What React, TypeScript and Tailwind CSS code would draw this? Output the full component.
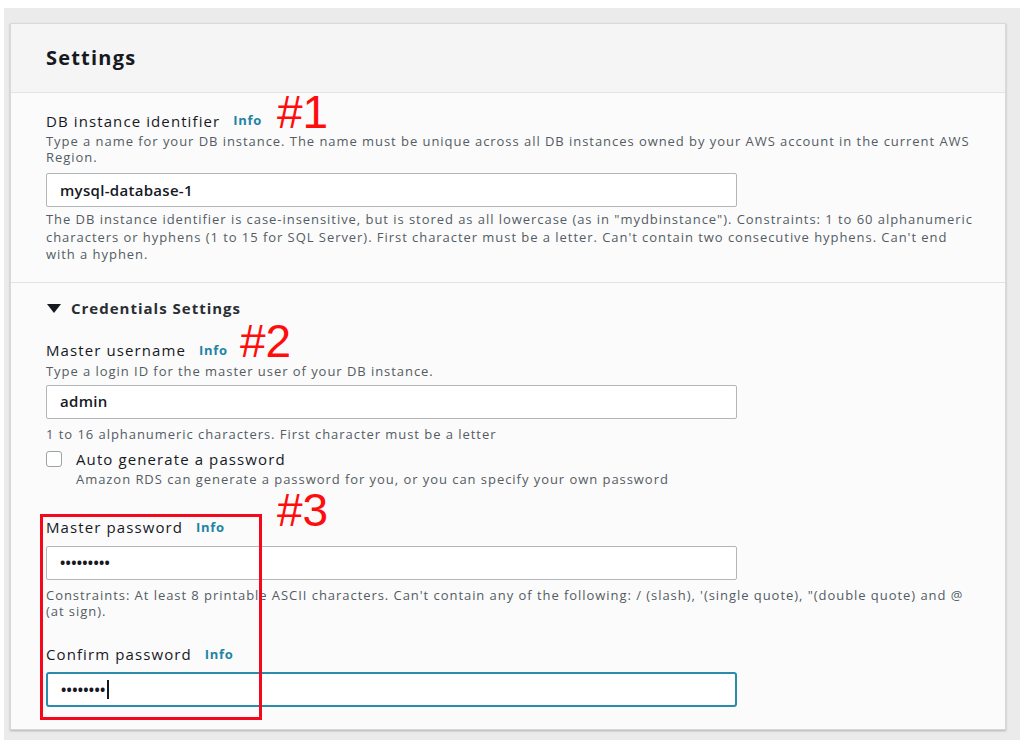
const FONT = "font-['Open_Sans','Noto_Sans',sans-serif]";

const LABEL = "text-[15px] font-medium tracking-[1.1px] text-[#16191f]";
const HINT = "text-[13px] tracking-[0.95px] text-[#545b64]";

function Info() {
  return (
    <span className="ml-[13px] text-[13px] font-bold tracking-[0.7px] text-[#1f84a6]">
      Info
    </span>
  );
}

function Mark({ text, className }: { text: string; className: string }) {
  return (
    <span
      className={
        "pointer-events-none absolute font-['Liberation_Sans',Arial,sans-serif] text-[46px] leading-[34px] text-[#ff0d0d] " +
        className
      }
    >
      {text}
    </span>
  );
}

function Field({
  value,
  focused = false,
  dots = false,
  cursor = false,
  className = "",
}: {
  value: string;
  focused?: boolean;
  dots?: boolean;
  cursor?: boolean;
  className?: string;
}) {
  return (
    <div
      className={
        "flex h-[34px] w-[691px] items-center bg-white px-[13px] " +
        (focused
          ? "rounded-[3px] border-2 border-[#2b8bab]"
          : "rounded-[2px] border border-[#b3b6b8]") +
        " " +
        className
      }
    >
      {dots ? (
        <span className="flex items-center">
          <span className="text-[14px] font-bold tracking-[0.3px] text-[#16191f]">
            {value}
          </span>
          {cursor && <span className="ml-[1px] h-[19px] w-[2px] bg-[#16191f]" />}
        </span>
      ) : (
        <span className="text-[15px] font-semibold tracking-[0.3px] text-[#16191f]">
          {value}
        </span>
      )}
    </div>
  );
}

export default function App() {
  return (
    <div className={"h-[749px] w-[1024px] bg-white px-[4px] pt-[8px] " + FONT}>
      <div className="h-[732px] bg-[#ebebeb] pb-[10px] pl-[6px] pr-[14px] pt-[15px]">
        <div className="relative h-[707px] border border-[#d9d9d9] bg-[#fbfbfb] shadow-[0_1px_2px_rgba(0,0,0,0.25)]">
          {/* header */}
          <div className="flex h-[69px] items-center border-b border-[#e4e4e4] bg-[#f5f5f5] px-[35px]">
            <h2 className="text-[20px] font-bold tracking-[1.2px] text-[#16191f]">
              Settings
            </h2>
          </div>

          {/* DB instance identifier */}
          <div className="border-b border-[#e2e2e2] px-[35px] pb-[18px] pt-[18px]">
            <div className="relative flex h-[20px] items-center">
              <span className={LABEL}>DB instance identifier</span>
              <Info />
              <Mark text="#1" className="left-[231px] top-[-16px]" />
            </div>
            <p className={"mt-[2px] whitespace-nowrap leading-[16px] " + HINT}>
              Type a name for your DB instance. The name must be unique across all DB
              instances owned by your AWS account in the current AWS
              <br />
              Region.
            </p>
            <Field value="mysql-database-1" className="mt-[8px]" />
            <p className={"mt-[4px] whitespace-nowrap leading-[17.5px] " + HINT}>
              The DB instance identifier is case-insensitive, but is stored as all
              lowercase (as in "mydbinstance"). Constraints: 1 to 60 alphanumeric
              <br />
              characters or hyphens (1 to 15 for SQL Server). First character must be a
              letter. Can't contain two consecutive hyphens. Can't end
              <br />
              with a hyphen.
            </p>
          </div>

          {/* Credentials */}
          <div className="px-[35px] pt-[16px]">
            <div className="flex h-[20px] items-center">
              <svg width="14" height="11" viewBox="0 0 14 11" className="ml-[1px]">
                <polygon points="0,1 14,1 7,10" fill="#16191f" />
              </svg>
              <span className="ml-[10px] text-[15px] font-bold tracking-[1px] text-[#2a2e33]">
                Credentials Settings
              </span>
            </div>

            <div className="relative mt-[22px] flex h-[20px] items-center">
              <span className={LABEL}>Master username</span>
              <Info />
              <Mark text="#2" className="left-[194px] top-[-17px]" />
            </div>
            <p className={"mt-[2px] leading-[16px] " + HINT}>
              Type a login ID for the master user of your DB instance.
            </p>
            <Field value="admin" className="mt-[6px]" />
            <p className={"mt-[7px] leading-[17px] " + HINT}>
              1 to 16 alphanumeric characters. First character must be a letter
            </p>

            <div className="mt-[6px] flex">
              <div className="mt-[2px] h-[16px] w-[16px] rounded-[3px] border border-[#9aa3a6] bg-white" />
              <div className="ml-[14px]">
                <div className={"h-[20px] leading-[20px] " + LABEL}>
                  Auto generate a password
                </div>
                <p className={"mt-[2px] leading-[16px] " + HINT}>
                  Amazon RDS can generate a password for you, or you can specify your own
                  password
                </p>
              </div>
            </div>

            <div className="relative mt-[31px]">
              <div className="relative flex h-[20px] items-center">
                <span className={LABEL}>Master password</span>
                <Info />
                <Mark text="#3" className="left-[231px] top-[-25px]" />
              </div>
              <Field value="•••••••••" dots className="mt-[8px]" />
              <p className={"mt-[7px] whitespace-nowrap leading-[16px] " + HINT}>
                Constraints: At least 8 printable ASCII characters. Can't contain any of
                the following: / (slash), '(single quote), "(double quote) and @
                <br />
                (at sign).
              </p>

              <div className="mt-[26px] flex h-[20px] items-center">
                <span className={LABEL}>Confirm password</span>
                <Info />
              </div>
              <Field value="••••••••" dots cursor focused className="mt-[7px] h-[35px]" />

              {/* annotation box */}
              <div className="pointer-events-none absolute bottom-[-13px] left-[-6px] top-[-4px] w-[222px] border-[3px] border-[#f5071c]" />
            </div>
          </div>
        </div>
      </div>
    </div>
  );
}
